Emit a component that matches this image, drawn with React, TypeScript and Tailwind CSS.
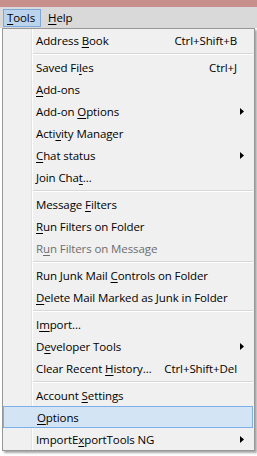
type Entry =
  | { sep: true }
  | {
      sep?: false;
      label: string;
      u: number;
      shortcut?: string;
      sub?: boolean;
      disabled?: boolean;
      active?: boolean;
    };

const entries: Entry[] = [
  { label: 'Address Book', u: 8, shortcut: 'Ctrl+Shift+B' },
  { sep: true },
  { label: 'Saved Files', u: 8, shortcut: 'Ctrl+J' },
  { label: 'Add-ons', u: 0 },
  { label: 'Add-on Options', u: 7, sub: true },
  { label: 'Activity Manager', u: 4 },
  { label: 'Chat status', u: 0, sub: true },
  { label: 'Join Chat…', u: 8 },
  { sep: true },
  { label: 'Message Filters', u: 8 },
  { label: 'Run Filters on Folder', u: 0 },
  { label: 'Run Filters on Message', u: 1, disabled: true },
  { sep: true },
  { label: 'Run Junk Mail Controls on Folder', u: 14 },
  { label: 'Delete Mail Marked as Junk in Folder', u: 0 },
  { sep: true },
  { label: 'Import…', u: 1 },
  { label: 'Developer Tools', u: 1, sub: true },
  { label: 'Clear Recent History…', u: 13, shortcut: 'Ctrl+Shift+Del' },
  { sep: true },
  { label: 'Account Settings', u: 8 },
  { label: 'Options', u: 0, active: true },
  { label: 'ImportExportTools NG', u: 7, sub: true },
];

function Label({ text, u }: { text: string; u: number }) {
  return (
    <span className="whitespace-nowrap">
      {text.slice(0, u)}
      <span className="underline underline-offset-[2px]">{text[u]}</span>
      {text.slice(u + 1)}
    </span>
  );
}

function Arrow() {
  return (
    <svg width="4" height="7" viewBox="0 0 4 7" className="block">
      <path d="M0 0 L4 3.5 L0 7 Z" fill="#000" />
    </svg>
  );
}

export default function App() {
  return (
    <div className="relative w-[257px] h-[456px] overflow-hidden bg-white font-['Open_Sans','Liberation_Sans',sans-serif] text-[11.5px] tracking-[-0.1px] text-black">
      {/* window title strip */}
      <div className="h-[7px] bg-[#c8908d]" />

      {/* menubar */}
      <div className="h-[21px] bg-[#d9d9d9] flex items-start pt-[2px] pl-[3px]">
        <div className="h-[18px] flex items-center pl-[3px] pr-[5px] border border-[#7ba9dc] bg-[#bcd3ec] leading-none">
          <Label text="Tools" u={0} />
        </div>
        <div className="h-[18px] flex items-center ml-[7px] leading-none">
          <Label text="Help" u={0} />
        </div>
      </div>

      {/* Tools popup */}
      <div className="absolute left-[2px] top-[28px] w-[253px] border border-[#979797] bg-[#f0f0f0] shadow-[2px_2px_2px_rgba(0,0,0,0.35)]">
        {/* gutter line */}
        <div className="absolute top-0 bottom-0 left-[28px] w-px bg-[#e2e3e3]" />
        <div className="absolute top-0 bottom-0 left-[29px] w-px bg-white" />

        <div className="relative flex flex-col">
          {entries.map((e, i) =>
            e.sep ? (
              <div key={i} className="h-[5px] pt-[2px] pl-[30px] pr-[1px]">
                <div className="h-px bg-[#d7d7d7]" />
                <div className="h-px bg-white" />
              </div>
            ) : (
              <div
                key={i}
                className={`h-[22px] mr-[1px] flex items-center pl-[33px] pt-px leading-none ${
                  e.active ? 'border border-[#7bafe6] bg-[#d3e4f5] pl-[32px]' : ''
                } ${e.disabled ? 'text-[#6d6d6d]' : ''}`}
              >
                <div className="flex-1">
                  <Label text={e.label} u={e.u} />
                </div>
                {e.shortcut && <span className="whitespace-nowrap">{e.shortcut}</span>}
                <div className="w-[16px] pl-[3px] flex items-center">{e.sub && <Arrow />}</div>
              </div>
            )
          )}
        </div>
      </div>
    </div>
  );
}
